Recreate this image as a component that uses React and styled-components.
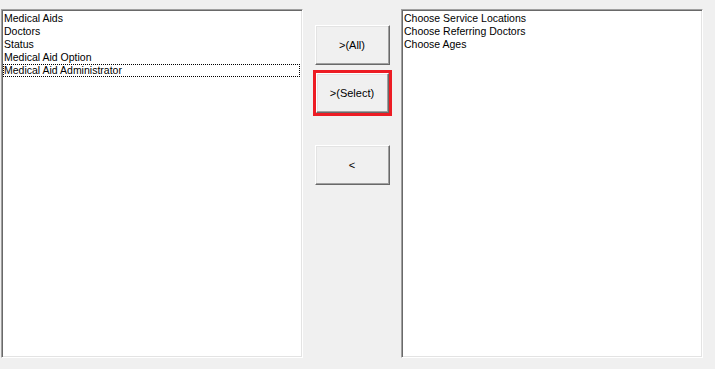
import React from 'react';
import styled, { createGlobalStyle } from 'styled-components';

const GlobalStyle = createGlobalStyle`
    html, body {
        margin:0;
        padding:0;
        background:#f0f0f0;
    }
    body{
        font-family:"Liberation Sans", Arial, sans-serif;
        font-size:11px;
        color:#000;
    }
`

const leftItems = ['Medical Aids', 'Doctors', 'Status', 'Medical Aid Option', 'Medical Aid Administrator']
const rightItems = ['Choose Service Locations', 'Choose Referring Doctors', 'Choose Ages']

const App = ()=>{
    return(
        <>
            <GlobalStyle />
            <Page>
                <ListBox>
                    {leftItems.map((item, i)=>(
                        <ListItem key={item} focused={i === leftItems.length - 1}>{item}</ListItem>
                    ))}
                </ListBox>
                <ButtonColumn>
                    <MoveBtn>&gt;(All)</MoveBtn>
                    <Highlight>
                        <MoveBtn narrow>&gt;(Select)</MoveBtn>
                    </Highlight>
                    <MoveBtn className='backBtn'>&lt;</MoveBtn>
                </ButtonColumn>
                <ListBox>
                    {rightItems.map((item)=>(
                        <ListItem key={item}>{item}</ListItem>
                    ))}
                </ListBox>
            </Page>
        </>
    )
};

const Page = styled.div`
    display:flex;
    align-items:flex-start;
    height:369px;
    box-sizing:border-box;
    padding:9px 0 0 1px;
`

const ListBox = styled.ul`
    list-style:none;
    margin:0;
    width:302px;
    height:349px;
    box-sizing:border-box;
    background:#fff;
    border-style:solid;
    border-width:1px;
    border-color:#a0a0a0 #fff #fff #a0a0a0;
    box-shadow:inset 1px 1px 0 #696969, inset -1px -1px 0 #e3e3e3;
    padding:2px 2px 2px 1px;
`

const ListItem = styled.li`
    height:13px;
    line-height:13px;
    padding-left:1px;
    font-size:10.5px;
    white-space:nowrap;
    box-sizing:border-box;
    outline:${props=>props.focused ? '1px dotted #000' : 'none'};
    outline-offset:-1px;
`

const ButtonColumn = styled.div`
    width:98px;
    display:flex;
    flex-direction:column;
    align-items:center;
    padding-top:16px;
    .backBtn{
        margin-top:29px;
    }
`

const MoveBtn = styled.button`
    width:${props=>props.narrow ? '73px' : '75px'};
    height:40px;
    margin:0;
    padding:0;
    box-sizing:border-box;
    background:#f0f0f0;
    font-family:"Liberation Sans", Arial, sans-serif;
    font-size:11px;
    color:#000;
    border-style:solid;
    border-width:1px;
    border-color:#fff #696969 #696969 #fff;
    box-shadow:inset -1px -1px 0 #a0a0a0, inset 1px 1px 0 #e3e3e3;
    cursor:pointer;
`

const Highlight = styled.div`
    margin-top:5px;
    border:3px solid #ed1c24;
    display:flex;
`

export default App
